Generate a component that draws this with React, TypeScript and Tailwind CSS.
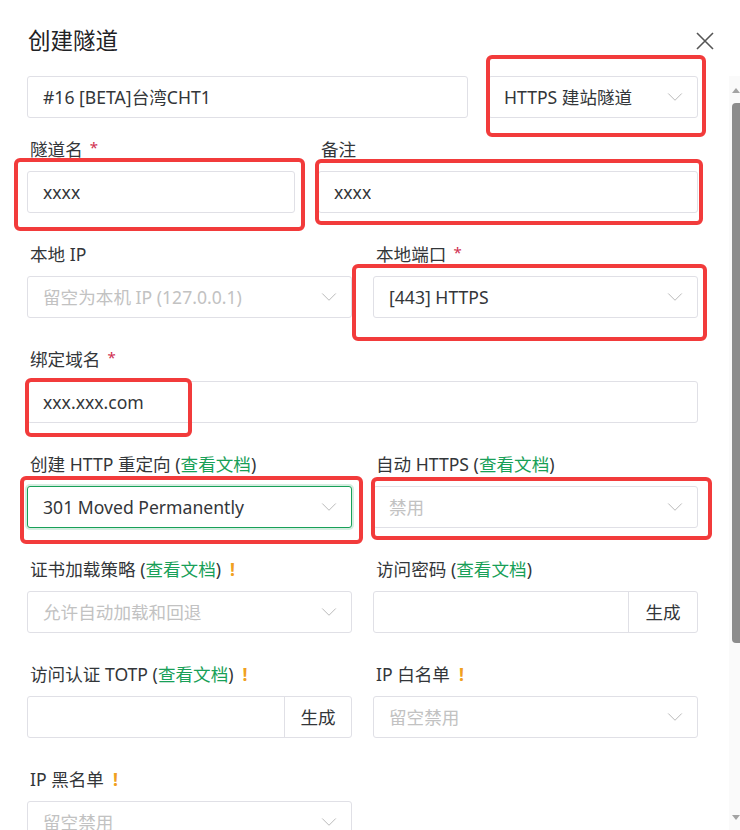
import { ChevronDown } from "lucide-react";
import clsx from "clsx";
import type { ReactNode } from "react";

const Docs = () => (
  <span>
    (<span className="text-[#18a058]">查看文档</span>)
  </span>
);

const Label = ({ children, required, warn }: { children: ReactNode; required?: boolean; warn?: boolean }) => (
  <div className="h-[22px] mb-[11px] pl-[3px] flex items-center text-[17.6px] leading-[22px] text-[#333639] whitespace-pre">
    {children}
    {required && <span className="ml-[7px] text-[15px] -mt-[4px] text-[#d03050]">*</span>}
    {warn && <span className="ml-[9px] font-bold text-[#f0a020]">!</span>}
  </div>
);

const Input = ({ value, placeholder }: { value?: string; placeholder?: string }) => (
  <div className="h-[42px] rounded-[3px] border border-[#e0e0e6] bg-white flex items-center pl-[15px] pr-[12px]">
    <span className={clsx("text-[17.6px] truncate", value ? "text-[#333639]" : "text-[#c2c2c2]")}>{value ?? placeholder}</span>
  </div>
);

const Select = ({ value, placeholder, focused }: { value?: string; placeholder?: string; focused?: boolean }) => (
  <div
    className={clsx(
      "h-[42px] rounded-[3px] border bg-white flex items-center pl-[15px] pr-[9px]",
      focused ? "border-[#18a058] shadow-[0_0_0_2px_rgba(24,160,88,0.18)]" : "border-[#e0e0e6]"
    )}
  >
    <span className={clsx("flex-1 truncate text-[17.6px]", value ? "text-[#333639]" : "text-[#c2c2c2]")}>{value ?? placeholder}</span>
    <ChevronDown size={26} strokeWidth={0.9} className="text-[#b8b8b8]" />
  </div>
);

const InputGroup = ({ addonWidth }: { addonWidth: string }) => (
  <div className="h-[42px] rounded-[3px] border border-[#e0e0e6] bg-white flex">
    <div className="flex-1" />
    <div className={clsx("border-l border-[#e0e0e6] flex items-center justify-center text-[17.6px] text-[#333639]", addonWidth)}>生成</div>
  </div>
);

const Mark = ({ className }: { className: string }) => (
  <div className={clsx("absolute border-4 border-[#f23b3b] rounded-[6px] pointer-events-none", className)} />
);

const Scrollbar = () => (
  <div className="w-[11px] ml-[31px] bg-[#fafafa] flex flex-col items-end pt-[12px] pb-[10px]">
    <div className="w-[8px] flex justify-center">
      <div className="w-0 h-0 border-l-[4px] border-r-[4px] border-b-[5px] border-l-transparent border-r-transparent border-b-[#a3a3a3]" />
    </div>
    <div className="mt-[10px] w-[8px] h-[540px] bg-[#8c8c8c] rounded-l-[4px]" />
    <div className="flex-1" />
    <div className="w-[8px] flex justify-center">
      <div className="w-0 h-0 border-l-[4px] border-r-[4px] border-t-[5px] border-l-transparent border-r-transparent border-t-[#a3a3a3]" />
    </div>
  </div>
);

export default function App() {
  return (
    <div className="w-[740px] h-[830px] overflow-hidden bg-white font-['Noto_Sans','Noto_Sans_CJK_SC',sans-serif]">
      <div className="h-[76px] pt-[6px] pl-[28px] pr-[26px] flex items-center justify-between">
        <h1 className="text-[22.5px] font-normal text-[#1f2225]">创建隧道</h1>
        <svg width="18" height="18" viewBox="0 0 18 18" className="text-[#555]">
          <path d="M1 1L17 17M17 1L1 17" stroke="currentColor" strokeWidth="1.6" fill="none" />
        </svg>
      </div>

      <div className="flex h-[754px]">
        <div className="w-[671px] ml-[27px] flex flex-col">
          <div className="flex gap-[20px]">
            <div className="w-[441px]">
              <Input value="#16 [BETA]台湾CHT1" />
            </div>
            <div className="flex-1 relative">
              <Select value="HTTPS 建站隧道" />
              <Mark className="-left-[2px] -right-[8px] -top-[21px] -bottom-[19px]" />
            </div>
          </div>

          <div className="mt-[20px] grid grid-cols-[268px_1fr] gap-x-[23px]">
            <div>
              <Label required>隧道名</Label>
              <div className="relative">
                <Input value="xxxx" />
                <Mark className="-left-[13px] -right-[10px] -top-[13px] -bottom-[18px]" />
              </div>
            </div>
            <div>
              <Label>备注</Label>
              <div className="relative">
                <Input value="xxxx" />
                <Mark className="-left-[3px] -right-[5px] -top-[12px] -bottom-[12px]" />
              </div>
            </div>
          </div>

          <div className="mt-[30px] grid grid-cols-2 gap-x-[21px] gap-y-[30px]">
            <div>
              <Label>本地 IP</Label>
              <Select placeholder="留空为本机 IP (127.0.0.1)" />
            </div>
            <div>
              <Label required>本地端口</Label>
              <div className="relative">
                <Select value="[443] HTTPS" />
                <Mark className="-left-[21px] -right-[9px] -top-[12px] -bottom-[23px]" />
              </div>
            </div>

            <div className="col-span-2">
              <Label required>绑定域名</Label>
              <div className="relative">
                <Input value="xxx.xxx.com" />
                <Mark className="-left-[2px] w-[167px] -top-[3px] -bottom-[14px]" />
              </div>
            </div>

            <div>
              <Label>
                创建 HTTP 重定向 <Docs />
              </Label>
              <div className="relative">
                <Select value="301 Moved Permanently" focused />
                <Mark className="-left-[7px] -right-[11px] -top-[10px] -bottom-[16px]" />
              </div>
            </div>
            <div>
              <Label>
                自动 HTTPS <Docs />
              </Label>
              <div className="relative">
                <Select placeholder="禁用" />
                <Mark className="-left-[2px] -right-[14px] -top-[9px] -bottom-[12px]" />
              </div>
            </div>

            <div>
              <Label warn>
                证书加载策略 <Docs />
              </Label>
              <Select placeholder="允许自动加载和回退" />
            </div>
            <div>
              <Label>
                访问密码 <Docs />
              </Label>
              <InputGroup addonWidth="w-[69px]" />
            </div>

            <div>
              <Label warn>
                访问认证 TOTP <Docs />
              </Label>
              <InputGroup addonWidth="w-[67px]" />
            </div>
            <div>
              <Label warn>IP 白名单</Label>
              <Select placeholder="留空禁用" />
            </div>

            <div>
              <Label warn>IP 黑名单</Label>
              <Select placeholder="留空禁用" />
            </div>
          </div>
        </div>
        <Scrollbar />
      </div>
    </div>
  );
}
